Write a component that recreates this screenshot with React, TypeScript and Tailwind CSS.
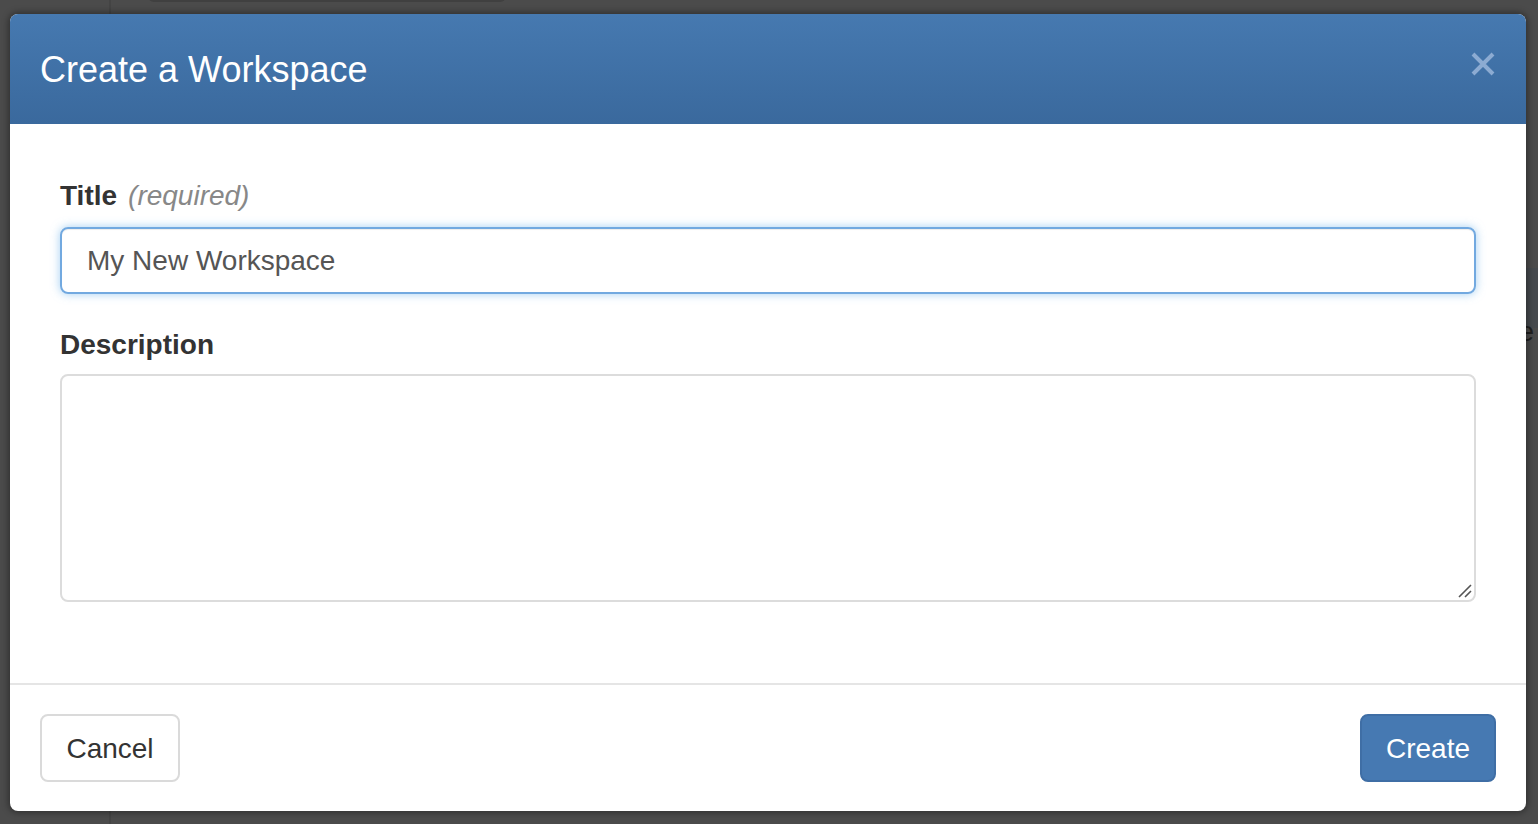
import React from "react";

export default function App() {
  return (
    <div
      className="relative w-[1538px] h-[824px] overflow-hidden bg-[#4b4b4b]"
      style={{ fontFamily: '"Liberation Sans", Arial, Helvetica, sans-serif' }}
    >
      {/* dimmed page behind */}
      <div className="absolute inset-0 flex">
        <div className="w-[111px] h-full border-r-2 border-[#444]" />
        <div className="flex-1 relative">
          <div className="absolute left-[37px] top-[-10px] w-[358px] h-[12px] rounded-b-[6px] border-b-2 border-[#404040]" />
          <div className="absolute right-0 top-[268px] w-[20px] h-[60px] bg-[#45494d]" />
          <div className="absolute right-[4px] top-[318px] text-[28px] text-[#1f1f1f] leading-none">e</div>
        </div>
      </div>

      {/* modal */}
      <div className="absolute left-[10px] top-[14px] w-[1516px] h-[797px] rounded-[8px] bg-white overflow-hidden shadow-[0_0_6px_2px_rgba(0,0,0,0.35)] flex flex-col">
        <div className="h-[110px] shrink-0 bg-gradient-to-b from-[#4679b0] to-[#3a699d] flex items-center justify-between pl-[30px] pr-[30px]">
          <h4 className="text-[36px] leading-none text-white pt-[2px]">Create a Workspace</h4>
          <svg width="26" height="26" viewBox="0 0 26 26" className="mb-[10px]">
            <path d="M3 3 L23 23 M23 3 L3 23" stroke="#8cabd2" strokeWidth="4" strokeLinecap="butt" />
          </svg>
        </div>

        <div className="flex-1 px-[50px] pt-[52px]">
          <div className="flex items-baseline gap-[11px] h-[40px] leading-[40px]">
            <span className="text-[28px] font-bold text-[#333]">Title</span>
            <span className="text-[28px] italic text-[#888]">(required)</span>
          </div>
          <div className="mt-[11px] h-[67px] rounded-[8px] border-2 border-[#72a9e0] shadow-[inset_0_1px_1px_rgba(0,0,0,0.075),0_0_10px_rgba(102,175,233,0.6)] flex items-center pl-[25px] text-[28px] text-[#555]">
            My New Workspace
          </div>
          <div className="mt-[31px] h-[40px] leading-[40px] text-[28px] font-bold text-[#333]">Description</div>
          <div className="relative mt-[9px]">
            <textarea className="block w-full h-[228px] rounded-[8px] border-2 border-[#dcdcdc] outline-none resize-none" />
            <svg width="16" height="16" viewBox="0 0 16 16" className="absolute right-[3px] bottom-[3px]">
              <path d="M2 14 L14 2 M8 14 L14 8" stroke="#555" strokeWidth="1.6" />
            </svg>
          </div>
        </div>

        <div className="h-[128px] shrink-0 border-t-2 border-[#e5e5e5] flex items-center justify-between px-[30px]">
          <button className="w-[140px] h-[68px] rounded-[8px] border-2 border-[#dadada] bg-white text-[28px] text-[#333] pt-[2px]">
            Cancel
          </button>
          <button className="w-[136px] h-[68px] rounded-[8px] border-2 border-[#3f6ea5] bg-[#4679b2] text-[28px] text-white pt-[2px]">
            Create
          </button>
        </div>
      </div>
    </div>
  );
}
